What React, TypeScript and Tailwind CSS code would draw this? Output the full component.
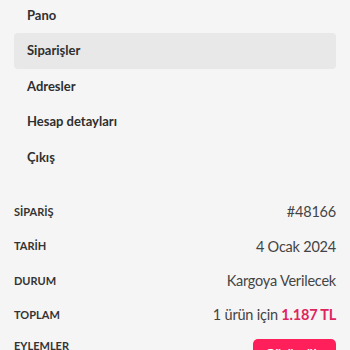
import React from "react";

const menu = ["Pano", "Siparişler", "Adresler", "Hesap detayları", "Çıkış"];

export default function App() {
  return (
    <div
      className="w-[350px] h-[350px] overflow-hidden bg-[#f5f5f5] text-[#333]"
      style={{ fontFamily: "Lato, 'Noto Sans', sans-serif" }}
    >
      <nav className="px-[14px] mt-[-2.5px] flex flex-col">
        {menu.map((m) => (
          <div
            key={m}
            className={
              "h-[35.5px] flex items-center px-[13px] rounded-[4px] text-[13px] font-bold text-[#2f2f2f] " +
              (m === "Siparişler" ? "bg-[#e8e8e8]" : "")
            }
          >
            {m}
          </div>
        ))}
      </nav>
      <div className="px-[14px] mt-[20px] flex flex-col">
        {[
          ["SİPARİŞ", <span>#48166</span>],
          ["TARİH", <span>4 Ocak 2024</span>],
          ["DURUM", <span>Kargoya Verilecek</span>],
          [
            "TOPLAM",
            <span>
              1 ürün için <span className="font-bold text-[#e0245e]">1.187 TL</span>
            </span>,
          ],
        ].map(([l, v], i) => (
          <div key={i} className="h-[34.4px] flex items-center justify-between">
            <span className="text-[11px] font-bold text-[#333]">{l as string}</span>
            <span className="text-[14.5px] tracking-[-0.015em] text-[#444]">{v as React.ReactNode}</span>
          </div>
        ))}
        <div className="flex justify-between items-start">
          <span className="text-[11px] font-bold text-[#333] mt-[5px]">EYLEMLER</span>
          <button className="mt-[6px] w-[83px] h-[36px] pt-[9px] flex justify-center items-start leading-none rounded-[5px] bg-[#ff1f5a] text-white text-[13px] font-bold">
            Görüntüle
          </button>
        </div>
      </div>
    </div>
  );
}
